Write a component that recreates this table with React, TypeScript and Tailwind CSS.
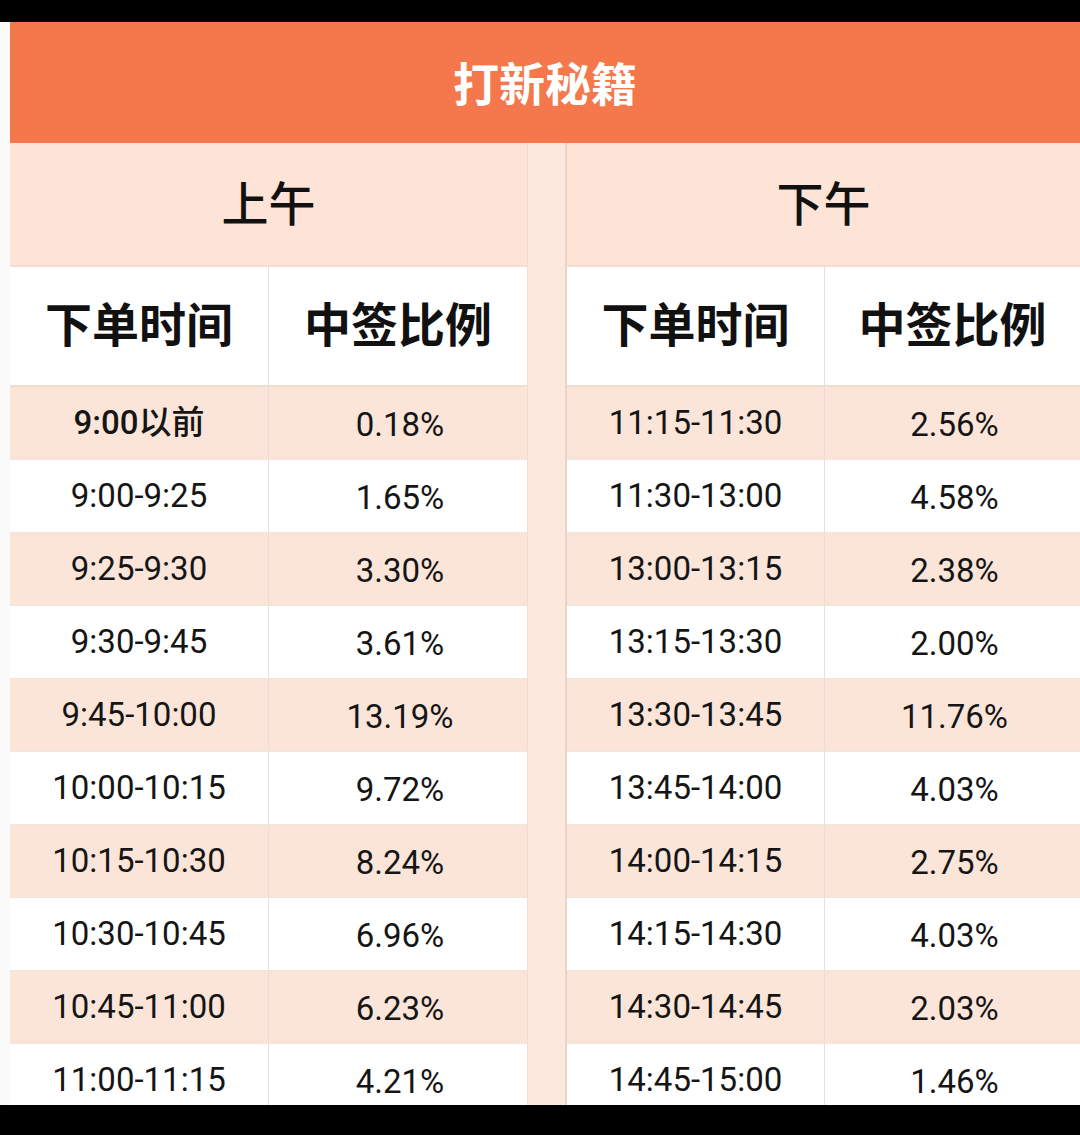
import React from "react";

const am: [string, string][] = [
  ["9:00以前", "0.18%"],
  ["9:00-9:25", "1.65%"],
  ["9:25-9:30", "3.30%"],
  ["9:30-9:45", "3.61%"],
  ["9:45-10:00", "13.19%"],
  ["10:00-10:15", "9.72%"],
  ["10:15-10:30", "8.24%"],
  ["10:30-10:45", "6.96%"],
  ["10:45-11:00", "6.23%"],
  ["11:00-11:15", "4.21%"],
];
const pm: [string, string][] = [
  ["11:15-11:30", "2.56%"],
  ["11:30-13:00", "4.58%"],
  ["13:00-13:15", "2.38%"],
  ["13:15-13:30", "2.00%"],
  ["13:30-13:45", "11.76%"],
  ["13:45-14:00", "4.03%"],
  ["14:00-14:15", "2.75%"],
  ["14:15-14:30", "4.03%"],
  ["14:30-14:45", "2.03%"],
  ["14:45-15:00", "1.46%"],
];

const cjk = "font-['Noto_Sans_CJK_SC',_'Noto_Sans',_sans-serif]";
const num = "font-['Roboto',_'Noto_Sans_CJK_SC',_sans-serif]";

function Panel({
  title,
  rows,
  width,
  leftCol,
  boldFirst,
}: {
  title: string;
  rows: [string, string][];
  width: string;
  leftCol: string;
  boldFirst?: boolean;
}) {
  return (
    <div className={`${width} flex flex-col shrink-0`}>
      <div className={`h-[122px] shrink-0 flex items-center justify-center pb-[5px] bg-[#fde4d7] text-[47px] font-medium text-[#111] ${cjk}`}>
        {title}
      </div>
      <div className="h-[2px] shrink-0 bg-[#f6ddd0]" />
      <div className="h-[118px] shrink-0 flex bg-white">
        <div className={`${leftCol} shrink-0 flex items-center justify-center pb-[7px] border-r border-[#e6dfdb] text-[47px] font-bold text-[#111] ${cjk}`}>
          下单时间
        </div>
        <div className={`flex-1 flex items-center justify-center pb-[7px] text-[47px] font-bold text-[#111] ${cjk}`}>
          中签比例
        </div>
      </div>
      <div className="h-[2px] shrink-0 bg-[#efdcd2]" />
      {rows.map(([t, p], i) => (
        <div
          key={i}
          className={`h-[73px] shrink-0 flex border-b border-[#f1e4dd] ${i % 2 === 0 ? "bg-[#fbe5d9]" : "bg-white"}`}
        >
          <div
            className={`${leftCol} shrink-0 flex items-center justify-center border-r border-[#e6dfdb] text-[33px] text-[#151515] ${num} ${
              boldFirst && i === 0 ? "font-medium" : ""
            }`}
          >
            {t}
          </div>
          <div className={`flex-1 flex items-center justify-center pt-[4px] pl-[4px] text-[33px] text-[#151515] ${num}`}>
            {p}
          </div>
        </div>
      ))}
    </div>
  );
}

export default function App() {
  return (
    <div className="w-[1080px] h-[1135px] bg-black flex flex-col overflow-hidden">
      <div className="h-[22px] shrink-0 bg-black" />
      <div className="h-[1083px] shrink-0 flex bg-[#fafafa] overflow-hidden">
        <div className="w-[10px] shrink-0 bg-[#fafafa]" />
        <div className="flex-1 flex flex-col overflow-hidden">
          <div className={`h-[121px] shrink-0 flex items-center justify-center bg-[#f4784b] text-white text-[46px] font-bold pb-[3px] ${cjk}`}>
            打新秘籍
          </div>
          <div className="flex-1 flex items-start bg-[#fde6da] overflow-hidden">
            <Panel title="上午" rows={am} width="w-[517px]" leftCol="w-[259px]" boldFirst />
            <div className="w-[40px] shrink-0 self-stretch flex">
              <div className="flex-1 bg-[#fde8dd] border-l border-[#f3ddd1]" />
              <div className="w-[2px] bg-[#e8d3c8]" />
            </div>
            <Panel title="下午" rows={pm} width="w-[513px]" leftCol="w-[258px]" />
          </div>
        </div>
      </div>
      <div className="h-[30px] shrink-0 bg-black" />
    </div>
  );
}
